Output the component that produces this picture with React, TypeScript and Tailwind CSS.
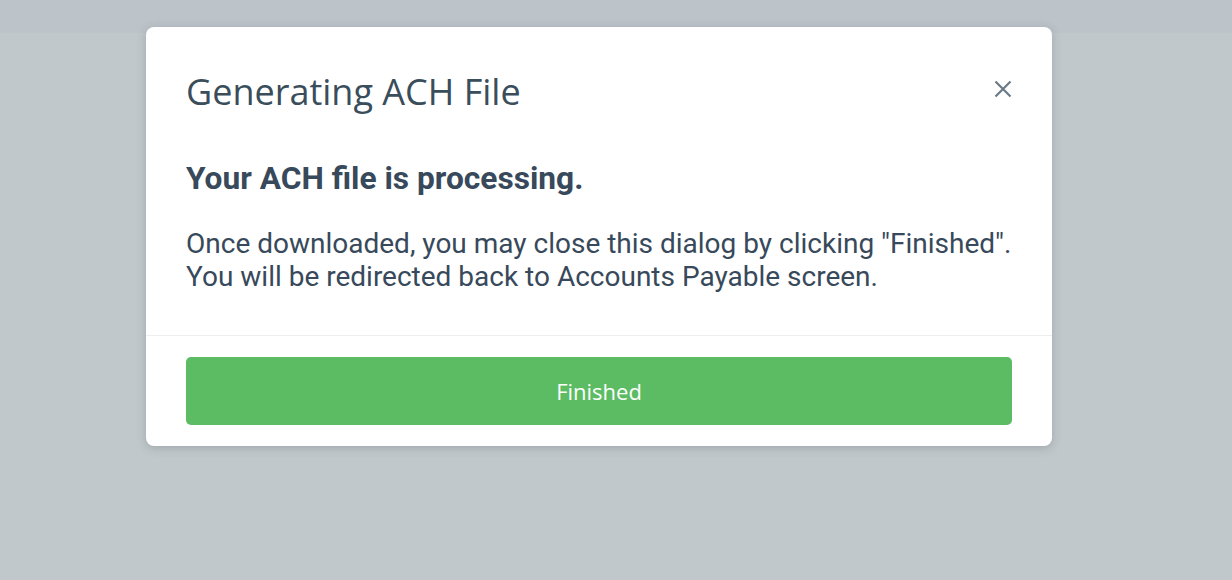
import React from "react";

export default function App() {
  return (
    <div className="relative w-[1232px] h-[580px] bg-[#c1c8cb] overflow-hidden">
      <div className="h-[33px] bg-[#bcc3c9]" />
      <div className="absolute left-[146px] top-[27px] w-[906px] bg-white rounded-[8px] shadow-[0_2px_10px_rgba(60,70,80,0.25)]">
        <div className="relative px-10 pt-[43px]">
          <h1 className="text-[36px] leading-[44px] text-[#3a4d5b] font-['Open_Sans',sans-serif] font-normal">
            Generating ACH File
          </h1>
          <button className="absolute right-[38px] top-[51px] w-[22px] h-[22px] flex items-center justify-center text-[#6b7a86]">
            <svg width="18" height="18" viewBox="0 0 18 18" fill="none" stroke="currentColor" strokeWidth="2.2" strokeLinecap="butt">
              <path d="M1.5 1.5 L16.5 16.5 M16.5 1.5 L1.5 16.5" />
            </svg>
          </button>
        </div>
        <div className="px-10 pt-[47px] pb-[42px] font-['Roboto',sans-serif] text-[#37495a]">
          <h2 className="text-[31.7px] leading-[36px] font-bold">Your ACH file is processing.</h2>
          <p className="mt-[30px] text-[28px] leading-[33px]">
            Once downloaded, you may close this dialog by clicking "Finished".
            <br />
            You will be redirected back to Accounts Payable screen.
          </p>
        </div>
        <div className="border-t border-[#eeeeee] px-10 pt-[21px] pb-[21px]">
          <button className="w-full h-[68px] rounded-[5px] bg-[#5cbc63] text-white text-[22px] font-['Open_Sans',sans-serif]">
            Finished
          </button>
        </div>
      </div>
    </div>
  );
}
